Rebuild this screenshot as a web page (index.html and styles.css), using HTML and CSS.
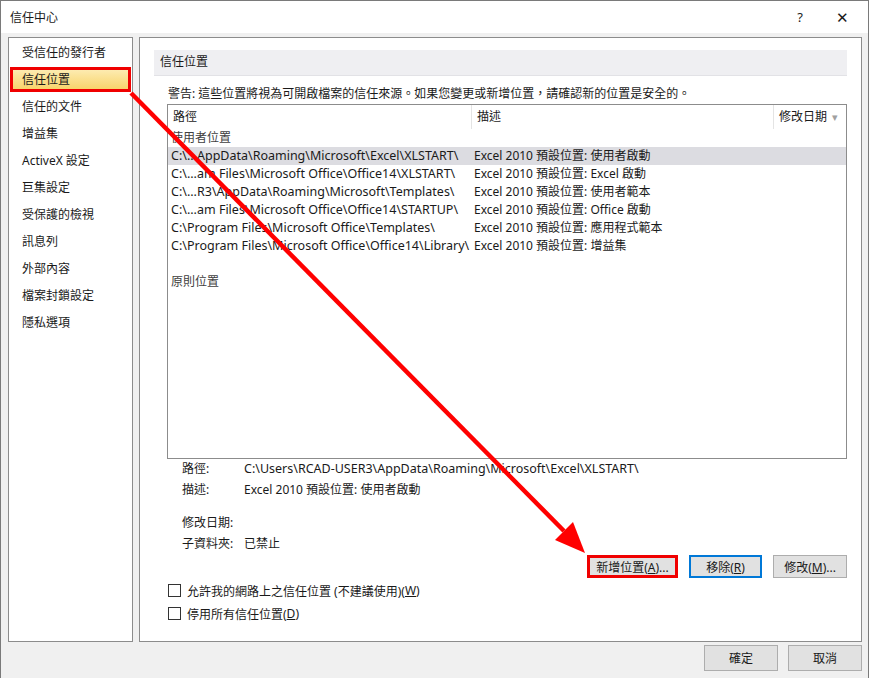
FILE: index.html
```html
<!DOCTYPE html>
<html>
<head>
  <title>信任中心</title>
  <link rel="stylesheet" href="styles.css">
</head>
<body>
  <div class="window">
    <div class="titlebar">
      <span class="title">信任中心</span>
      <span class="title-btn help">?</span>
      <span class="title-btn close">&#x2715;</span>
    </div>

    <div class="main">
      <ul class="nav">
        <li>受信任的發行者</li>
        <li class="active">信任位置</li>
        <li>信任的文件</li>
        <li>增益集</li>
        <li>ActiveX 設定</li>
        <li>巨集設定</li>
        <li>受保護的檢視</li>
        <li>訊息列</li>
        <li>外部內容</li>
        <li>檔案封鎖設定</li>
        <li>隱私選項</li>
      </ul>

      <div class="content">
        <div class="section-title">信任位置</div>
        <p class="warning">警告: 這些位置將視為可開啟檔案的信任來源。如果您變更或新增位置，請確認新的位置是安全的。</p>

        <div class="list">
          <div class="list-head">
            <div class="col col-path">路徑</div>
            <div class="col col-desc">描述</div>
            <div class="col col-date">修改日期 <span class="sort">&#x25BE;</span></div>
          </div>
          <div class="group">使用者位置</div>
          <div class="row selected">
            <div class="col col-path">C:\...AppData\Roaming\Microsoft\Excel\XLSTART\</div>
            <div class="col col-desc">Excel 2010 預設位置: 使用者啟動</div>
          </div>
          <div class="row">
            <div class="col col-path">C:\...am Files\Microsoft Office\Office14\XLSTART\</div>
            <div class="col col-desc">Excel 2010 預設位置: Excel 啟動</div>
          </div>
          <div class="row">
            <div class="col col-path">C:\...R3\AppData\Roaming\Microsoft\Templates\</div>
            <div class="col col-desc">Excel 2010 預設位置: 使用者範本</div>
          </div>
          <div class="row">
            <div class="col col-path">C:\...am Files\Microsoft Office\Office14\STARTUP\</div>
            <div class="col col-desc">Excel 2010 預設位置: Office 啟動</div>
          </div>
          <div class="row">
            <div class="col col-path">C:\Program Files\Microsoft Office\Templates\</div>
            <div class="col col-desc">Excel 2010 預設位置: 應用程式範本</div>
          </div>
          <div class="row">
            <div class="col col-path">C:\Program Files\Microsoft Office\Office14\Library\</div>
            <div class="col col-desc">Excel 2010 預設位置: 增益集</div>
          </div>
          <div class="group policy">原則位置</div>
        </div>

        <div class="details">
          <div class="detail"><span class="label">路徑:</span><span class="path">C:\Users\RCAD-USER3\AppData\Roaming\Microsoft\Excel\XLSTART\</span></div>
          <div class="detail"><span class="label">描述:</span><span>Excel 2010 預設位置: 使用者啟動</span></div>
          <div class="detail gap"><span class="label">修改日期:</span><span></span></div>
          <div class="detail"><span class="label">子資料夾:</span><span>已禁止</span></div>
        </div>

        <div class="actions">
          <button class="btn btn-add">新增位置(<u>A</u>)...</button>
          <button class="btn btn-default">移除(<u>R</u>)</button>
          <button class="btn">修改(<u>M</u>)...</button>
        </div>

        <label class="check"><span class="box"></span>允許我的網路上之信任位置 (不建議使用)(<u>W</u>)</label>
        <label class="check"><span class="box"></span>停用所有信任位置(<u>D</u>)</label>
      </div>
    </div>

    <div class="footer">
      <button class="btn btn-foot">確定</button>
      <button class="btn btn-foot">取消</button>
    </div>

    <!-- annotation arrow drawn over the dialog -->
    <svg class="arrow" width="869" height="678" viewBox="0 0 869 678">
      <line x1="131" y1="93" x2="564" y2="531" stroke="#ff0000" stroke-width="4.5"/>
      <polygon points="585,553 555,540 573,522" fill="#ff0000"/>
    </svg>
  </div>
</body>
</html>
```

FILE: styles.css
```css
body {
  margin: 0;
  font-family: "Noto Sans", "Noto Sans CJK TC", sans-serif;
  font-size: 12px;
  color: #1a1a1a;
}

.window {
  position: relative;
  width: 869px;
  height: 678px;
  box-sizing: border-box;
  border: 1px solid #7a7a7a;
  border-bottom: none;
  background-color: #f0f0f0;
  display: flex;
  flex-direction: column;
}

.titlebar {
  height: 32px;
  background-color: #ffffff;
  display: flex;
  align-items: center;
  padding-left: 9px;
}

.title {
  flex: 1;
}

.title-btn {
  width: 40px;
  text-align: center;
  font-size: 13px;
}

.help {
  margin-right: 2px;
}

.close {
  margin-right: 6px;
  font-size: 15px;
}

.main {
  display: flex;
  gap: 6px;
  padding: 4px 6px 0 7px;
  height: 605px;
}

.nav {
  list-style: none;
  margin: 0;
  padding: 1px 0 0 0;
  width: 125px;
  box-sizing: border-box;
  border: 1px solid #8c8c8c;
  background-color: #ffffff;
}

.nav li {
  height: 27px;
  line-height: 27px;
  padding-left: 13px;
  white-space: nowrap;
}

.nav li.active {
  margin: 1px 1px;
  height: 25px;
  line-height: 19px;
  box-sizing: border-box;
  border: 3px solid #f00000;
  padding-left: 9px;
  background: linear-gradient(#fdebb0, #f8d46c);
}

.content {
  flex: 1;
  box-sizing: border-box;
  border: 1px solid #8c8c8c;
  background-color: #ffffff;
  padding: 12px 14px 0 14px;
}

.section-title {
  height: 26px;
  line-height: 24px;
  padding-left: 6px;
  background-color: #efeff2;
  border-bottom: 1px solid #e2e2e6;
  box-sizing: border-box;
}

.warning {
  margin: 9px 0 1px 14px;
  line-height: 18px;
}

.list {
  margin-left: 13px;
  height: 355px;
  box-sizing: border-box;
  border: 1px solid #8c8c8c;
  overflow: hidden;
}

.list-head {
  display: flex;
  height: 24px;
  line-height: 24px;
}

.list-head .col {
  padding-left: 5px;
}

.list-head .col-desc,
.list-head .col-date {
  border-left: 1px solid #e4e4e4;
  height: 24px;
  box-sizing: border-box;
}

.col {
  white-space: nowrap;
  box-sizing: border-box;
}

.col-path {
  width: 303px;
}

.row .col-path,
.path {
  font-size: 12.5px;
}

.col-desc {
  width: 302px;
}

.col-date {
  flex: 1;
}

.sort {
  color: #a0a0a0;
  font-size: 11px;
  margin-left: 2px;
}

.group {
  height: 18px;
  line-height: 18px;
  padding-left: 3px;
  color: #404040;
}

.group.policy {
  margin-top: 18px;
}

.row {
  display: flex;
  height: 18px;
  line-height: 18px;
}

.row .col-path {
  padding-left: 3px;
}

.row .col-desc {
  padding-left: 3px;
}

.row.selected {
  background-color: #dcdce1;
}

.details {
  margin: 0 0 0 28px;
}

.detail {
  display: flex;
  height: 21px;
  line-height: 20px;
}

.detail.gap {
  margin-top: 12px;
}

.label {
  width: 62px;
}

.actions {
  display: flex;
  justify-content: flex-end;
  gap: 11px;
  margin-top: 0;
}

.btn {
  font-family: inherit;
  font-size: 12px;
  color: #1a1a1a;
  background-color: #e1e1e1;
  border: 1px solid #adadad;
  padding: 0;
  height: 23px;
  width: 74px;
}

.btn-add {
  width: 91px;
  border: 3px solid #f00000;
}

.btn-default {
  width: 73px;
  border: 2px solid #0078d7;
}

.check {
  display: flex;
  align-items: center;
  margin-left: 14px;
  height: 23px;
}

.check:first-of-type {
  margin-top: 1px;
}

.box {
  width: 13px;
  height: 13px;
  box-sizing: border-box;
  border: 1px solid #333333;
  background-color: #ffffff;
  margin-right: 6px;
}

.footer {
  display: flex;
  justify-content: flex-end;
  gap: 10px;
  padding: 3px 6px 0 0;
}

.btn-foot {
  height: 26px;
}

.arrow {
  position: absolute;
  left: -1px;
  top: -1px;
  pointer-events: none;
}
```
